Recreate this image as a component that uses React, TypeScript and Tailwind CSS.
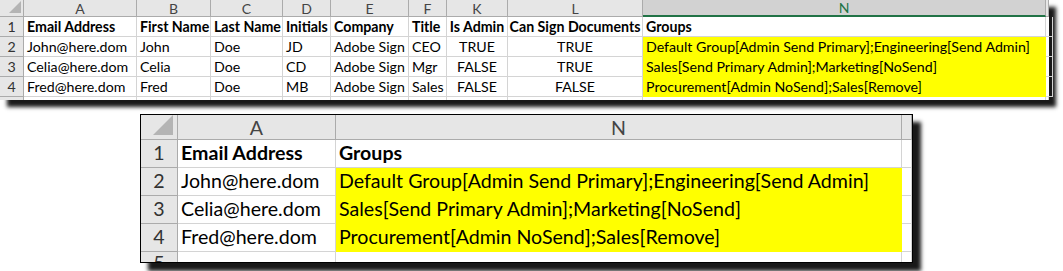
import React from 'react';

type Col = { key: string; label: string; align?: 'left' | 'center'; selected?: boolean; partial?: boolean };

const topCols: Col[] = [
  { key: 'A', label: 'A' },
  { key: 'B', label: 'B' },
  { key: 'C', label: 'C' },
  { key: 'D', label: 'D' },
  { key: 'E', label: 'E' },
  { key: 'F', label: 'F' },
  { key: 'K', label: 'K', align: 'center' },
  { key: 'L', label: 'L', align: 'center' },
  { key: 'N', label: 'N', selected: true },
  { key: 'O', label: '', partial: true },
];

const topRows: string[][] = [
  ['Email Address', 'First Name', 'Last Name', 'Initials', 'Company', 'Title', 'Is Admin', 'Can Sign Documents', 'Groups', ''],
  ['John@here.dom', 'John', 'Doe', 'JD', 'Adobe Sign', 'CEO', 'TRUE', 'TRUE', 'Default Group[Admin Send Primary];Engineering[Send Admin]', ''],
  ['Celia@here.dom', 'Celia', 'Doe', 'CD', 'Adobe Sign', 'Mgr', 'FALSE', 'TRUE', 'Sales[Send Primary Admin];Marketing[NoSend]', ''],
  ['Fred@here.dom', 'Fred', 'Doe', 'MB', 'Adobe Sign', 'Sales', 'FALSE', 'FALSE', 'Procurement[Admin NoSend];Sales[Remove]', ''],
];

const bottomCols: Col[] = [
  { key: 'A', label: 'A' },
  { key: 'N', label: 'N' },
  { key: 'O', label: '', partial: true },
];

const bottomRows: string[][] = topRows.map(r => [r[0], r[8], '']);

function Sheet({
  cols,
  rows,
  gridClass,
  textClass,
  headClass,
  cornerClass,
  padClass,
  yellowCol,
}: {
  cols: Col[];
  rows: string[][];
  gridClass: string;
  textClass: string;
  headClass: string;
  cornerClass: string;
  padClass: string;
  yellowCol: number;
}) {
  return (
    <div className={`grid bg-white ${gridClass} ${textClass}`} style={{ fontFamily: 'Lato, "Liberation Sans", sans-serif' }}>
      {/* corner */}
      <div className="relative bg-[#e6e6e6] border-r border-b border-[#ababab]">
        <div className={`absolute bg-[#b4b4b4] ${cornerClass}`} style={{ clipPath: 'polygon(100% 0, 100% 100%, 0 100%)' }} />
      </div>
      {cols.map(c => (
        <div
          key={c.key}
          className={
            c.selected
              ? `flex items-center justify-center bg-[#d2d2d2] text-[#217346] border-r border-[#ababab] border-b-2 border-b-[#217346] ${headClass}`
              : `flex items-center justify-center bg-[#e6e6e6] text-[#444] border-r border-b border-[#ababab] ${headClass}`
          }
        >
          {c.label}
        </div>
      ))}

      {rows.map((row, i) => (
        <React.Fragment key={i}>
          <div className={`flex items-end justify-center bg-[#e6e6e6] text-[#333] border-r border-b border-[#ababab] ${padClass}`}>{i + 1}</div>
          {row.map((v, j) => {
            const yellow = i > 0 && j === yellowCol;
            return (
              <div
                key={j}
                className={`flex items-end whitespace-nowrap overflow-visible border-b ${
                  cols[j].align === 'center' ? 'justify-center' : 'justify-start px-[3px]'
                } ${yellow ? 'bg-[#ffff00] border-[#ffff00]' : 'border-r border-[#d4d4d4]'} ${i === 0 ? 'font-bold' : ''} text-black ${padClass}`}
              >
                {v}
              </div>
            );
          })}
        </React.Fragment>
      ))}

      {/* partial row 5 */}
      <div className="relative overflow-hidden bg-[#e6e6e6] border-r border-[#ababab]">
        <span className="absolute left-0 right-0 top-[1px] text-center text-[#333]">5</span>
      </div>
      {cols.map(c => (
        <div key={c.key} className="border-r border-[#d4d4d4]" />
      ))}
    </div>
  );
}

export default function App() {
  return (
    <div className="w-[1063px] h-[271px] bg-white overflow-hidden">
      <div className="w-[1049px] shadow-[7px_7px_4px_rgba(0,0,0,0.9)]">
        <Sheet
          cols={topCols}
          rows={topRows}
          gridClass="grid-cols-[24px_113px_74px_72px_48px_78px_38px_61px_135px_403px_3px] grid-rows-[17px_20px_20px_20px_20px_3px]"
          textClass="text-[14.2px] leading-none"
          headClass="text-[14px] leading-[15px]"
          cornerClass="right-[2px] bottom-[3px] w-[12px] h-[12px]"
          padClass="pb-[2px]"
          yellowCol={8}
        />
      </div>
      <div className="mt-[14px] ml-[140px] w-[773px] border border-black shadow-[8px_8px_4px_rgba(0,0,0,0.9)]">
        <Sheet
          cols={bottomCols}
          rows={bottomRows}
          gridClass="grid-cols-[37px_158px_566px_10px] grid-rows-[25px_28px_28px_28px_28px_10px]"
          textClass="text-[19.6px] leading-none"
          headClass="text-[19.6px] leading-[21px]"
          cornerClass="right-[4px] bottom-[4px] w-[20px] h-[20px]"
          padClass="pb-[4px]"
          yellowCol={1}
        />
      </div>
    </div>
  );
}
